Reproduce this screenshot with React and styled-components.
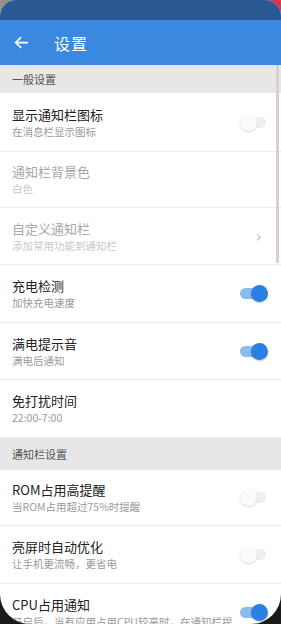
import React from 'react'
import styled, { createGlobalStyle } from 'styled-components'

const GlobalStyle = createGlobalStyle`
  html, body {
    margin: 0;
    padding: 0;
    width: 281px;
    height: 624px;
    overflow: hidden;
    background: #161616;
  }
  body {
    font-family: "Noto Sans CJK SC", "Noto Sans", sans-serif;
    -webkit-font-smoothing: antialiased;
  }
`

const Backdrop = styled.div`
  width: 281px;
  height: 624px;
  background:
    linear-gradient(90deg, #9b9388 0%, #3c5f92 30%, #2d5a95 70%, #d7394c 100%) top / 100% 40px no-repeat,
    #1a1a1a;
`

const Phone = styled.div`
  position: relative;
  width: 281px;
  height: 624px;
  background: #fff;
  border-radius: 16px 16px 30px 30px;
  overflow: hidden;
  display: flex;
  flex-direction: column;
`

const StatusBar = styled.div`
  height: 20px;
  flex-shrink: 0;
  background: #2a5893;
`

const Toolbar = styled.div`
  height: 45px;
  flex-shrink: 0;
  background: #3b88e0;
  display: flex;
  align-items: center;
  padding-left: 14px;
  gap: 26px;
  color: #fff;
`

const Title = styled.div`
  font-size: 16px;
  letter-spacing: 1px;
`

const SectionHeader = styled.div`
  height: ${p => p.$h}px;
  flex-shrink: 0;
  background: ${p => p.$top ? 'linear-gradient(#dfe7f3 0px, #ebe7e4 6px, #e7e7e7 14px)' : '#e7e7e7'};
  display: flex;
  align-items: center;
  padding-left: 12px;
  font-size: 11px;
  color: #555;
`

const Row = styled.div`
  height: ${p => p.$h}px;
  flex-shrink: 0;
  display: flex;
  align-items: center;
  padding: 0 15px 0 12px;
  border-bottom: 1px solid #ececec;
  box-sizing: border-box;
`

const Texts = styled.div`
  flex: 1;
  min-width: 0;
  display: flex;
  flex-direction: column;
  gap: 2px;
`

const RowTitle = styled.div`
  font-size: 13px;
  line-height: 17px;
  color: ${p => p.$disabled ? '#a8a8a8' : '#222'};
  white-space: nowrap;
`

const RowSub = styled.div`
  font-size: 10.5px;
  line-height: 14px;
  color: ${p => p.$disabled ? '#c8c8c8' : '#9a9a9a'};
  white-space: nowrap;
  overflow: hidden;
`

const Track = styled.div`
  position: relative;
  width: 26px;
  height: 11px;
  border-radius: 6px;
  background: ${p => p.$on ? '#8cbcef' : '#efefef'};
  flex-shrink: 0;
  margin-left: 8px;
`

const Knob = styled.div`
  position: absolute;
  top: -3px;
  left: ${p => p.$on ? '11px' : '0px'};
  width: 17px;
  height: 17px;
  border-radius: 50%;
  background: ${p => p.$on ? '#2b7fe2' : '#fbfbfb'};
  box-shadow: 0 1px 2px rgba(0, 0, 0, ${p => p.$on ? 0.22 : 0.16});
`

const Chevron = styled.div`
  color: #c4c4c4;
  font-size: 16px;
  margin-right: 4px;
  font-family: "DejaVu Sans", sans-serif;
`

const ScrollThumb = styled.div`
  position: absolute;
  right: 2px;
  top: 65px;
  width: 3px;
  height: 198px;
  background: #d9cfcf;
`

function Toggle({ on }) {
  return (
    <Track $on={on}>
      <Knob $on={on} />
    </Track>
  )
}

const general = [
  { title: '显示通知栏图标', sub: '在消息栏显示图标', toggle: false, h: 59 },
  { title: '通知栏背景色', sub: '白色', disabled: true, h: 56 },
  { title: '自定义通知栏', sub: '添加常用功能到通知栏', disabled: true, chevron: true, h: 57 },
  { title: '充电检测', sub: '加快充电速度', toggle: true, h: 58 },
  { title: '满电提示音', sub: '满电后通知', toggle: true, h: 57 },
  { title: '免打扰时间', sub: '22:00-7:00', h: 58 },
]

const notify = [
  { title: 'ROM占用高提醒', sub: '当ROM占用超过75%时提醒', toggle: false, h: 56 },
  { title: '亮屏时自动优化', sub: '让手机更流畅，更省电', toggle: false, h: 58 },
  { title: 'CPU占用通知', sub: '开启后，当有应用占用CPU较高时，在通知栏提醒', toggle: true, h: 58 },
]

function SettingRow({ item }) {
  return (
    <Row $h={item.h}>
      <Texts>
        <RowTitle $disabled={item.disabled}>{item.title}</RowTitle>
        <RowSub $disabled={item.disabled}>{item.sub}</RowSub>
      </Texts>
      {item.toggle !== undefined && <Toggle on={item.toggle} />}
      {item.chevron && <Chevron>›</Chevron>}
    </Row>
  )
}

export default function App() {
  return (
    <Backdrop>
      <GlobalStyle />
      <Phone>
        <StatusBar />
        <Toolbar>
          <svg width="14" height="13" viewBox="0 0 16 14" fill="none" stroke="#fff" strokeWidth="2" strokeLinecap="square">
            <path d="M15 7H2.5" />
            <path d="M7.5 1.5L2 7l5.5 5.5" />
          </svg>
          <Title>设置</Title>
        </Toolbar>
        <SectionHeader $h={28} $top>一般设置</SectionHeader>
        {general.map(item => <SettingRow key={item.title} item={item} />)}
        <SectionHeader $h={32}>通知栏设置</SectionHeader>
        {notify.map(item => <SettingRow key={item.title} item={item} />)}
        <ScrollThumb />
      </Phone>
    </Backdrop>
  )
}
